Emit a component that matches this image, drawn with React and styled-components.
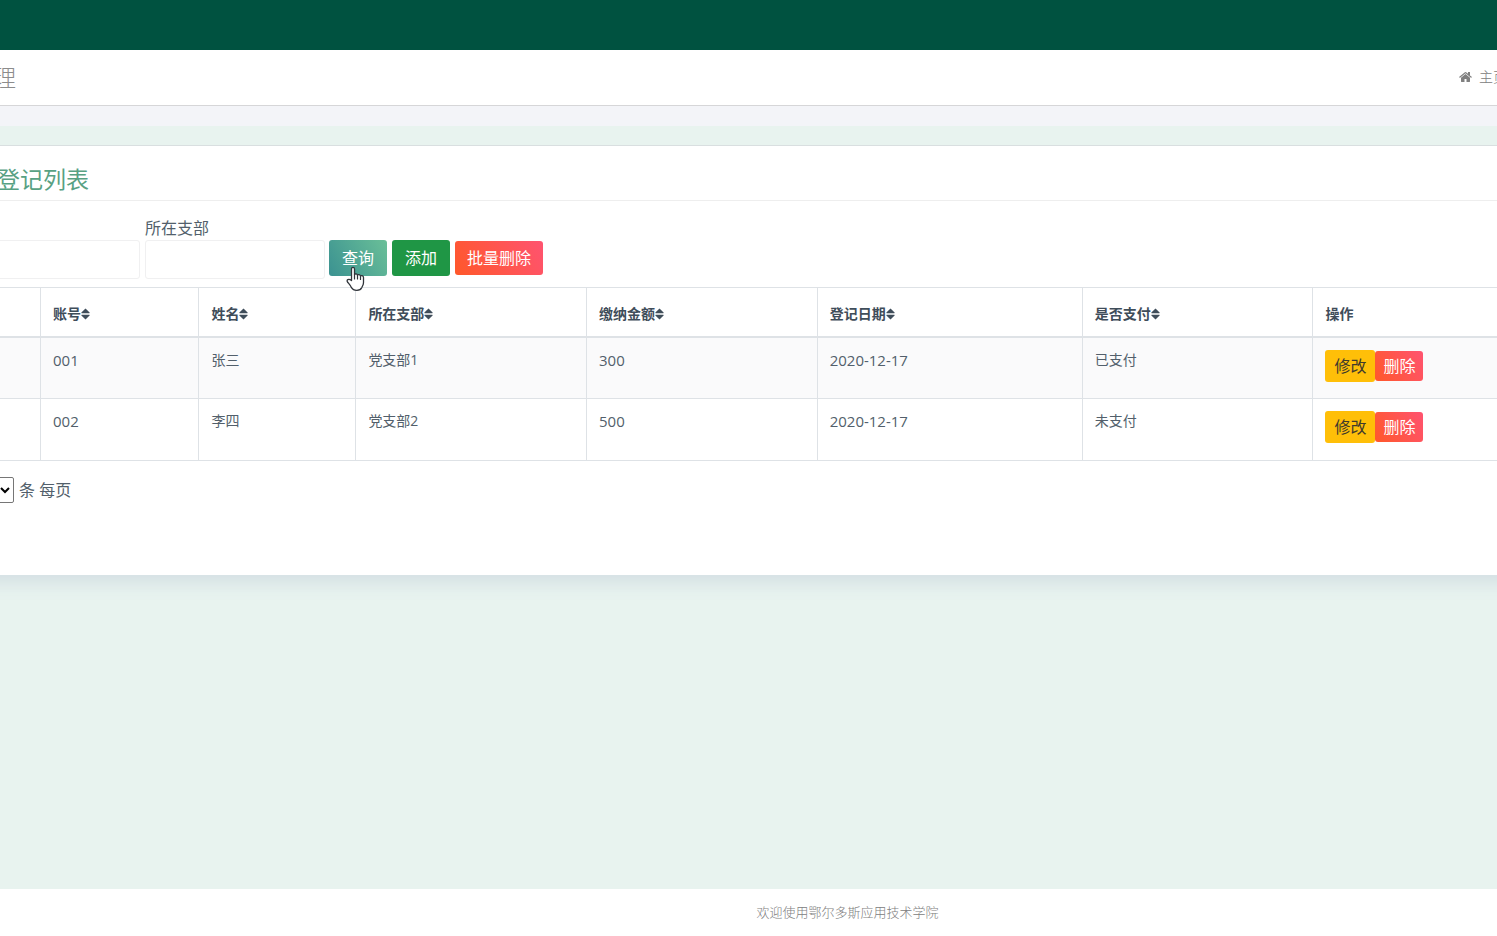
import React from "react";
import styled, { createGlobalStyle } from "styled-components";

const GlobalStyle = createGlobalStyle`
  *, *::before, *::after { box-sizing: border-box; }
  html { overflow-x: hidden; }
  body {
    margin: 0;
    background: #e8f3ef;
    color: #525f6b;
    font-family: "Open Sans", "Noto Sans CJK SC", sans-serif;
    font-size: 16px;
    line-height: 24px;
  }
`;

const Viewport = styled.div`
  overflow: hidden;
`;

/* The page is wider than the window and scrolled a little to the right. */
const Page = styled.div`
  display: flex;
  flex-direction: column;
  min-height: 100vh;
  margin: 0 -33px 0 -40px;
`;

const TopBar = styled.header`
  height: 50px;
  background: #005240;
`;

const TitleBar = styled.div`
  display: flex;
  align-items: center;
  justify-content: space-between;
  height: 56px;
  padding: 0 23px 2px 33px;
  background: #fff;
  border-bottom: 1px solid #d6d6d8;
`;

const PageTitle = styled.h1`
  margin: 0;
  color: #8c8c8c;
  font-size: 23px;
  font-weight: 300;
`;

const HomeLink = styled.a`
  display: flex;
  align-items: center;
  gap: 6px;
  color: #808080;
  font-size: 14px;
  font-weight: 300;
  text-decoration: none;
`;

const Band = styled.div`
  height: 20px;
  background: #f3f4f8;
`;

const Main = styled.main`
  flex: 1;
  padding: 19px 0 24px;
`;

const Card = styled.section`
  min-height: 430px;
  background: #fff;
  border-top: 1px solid #d9dfe0;
  box-shadow: 0 16px 16px -8px rgba(120, 140, 180, 0.18);
`;

const CardTitle = styled.h2`
  margin: 0;
  padding: 17px 37px 5px;
  border-bottom: 1px solid #eee;
  color: #58a183;
  font-size: 23px;
  font-weight: 400;
  line-height: 32px;
`;

const Filters = styled.form`
  display: flex;
  align-items: flex-end;
  gap: 5px;
  padding: 15px 0 8px;
`;

const Field = styled.label`
  display: flex;
  flex-direction: column;
  width: 180px;
  min-height: 63px;
  justify-content: flex-end;
`;

const TextBox = styled.input`
  width: 100%;
  height: 39px;
  padding: 0 12px;
  border: 1px solid #f0f0f1;
  border-radius: 3px;
  background: #fff;
  font: inherit;
`;

const FilterButtons = styled.div`
  display: flex;
  align-items: center;
  gap: 5px;
  height: 36px;
  margin: 0 0 3px -1px;
`;

const tones = {
  query: "linear-gradient(60deg, #3b9291, #6abf98)",
  add: "#1f9645",
  danger: "linear-gradient(60deg, #ff582a, #ff5370)",
  edit: "#ffbf08",
};

const Button = styled.button`
  position: relative;
  display: flex;
  align-items: center;
  justify-content: center;
  height: ${(p) => (p.$small ? 32 : 36) - (p.$tone === "danger" ? 2 : 0)}px;
  padding: 0 ${(p) => (p.$small ? 9 : 13) - (p.$tone === "danger" ? 1 : 0)}px;
  border: 0;
  border-radius: 3px;
  background: ${(p) => tones[p.$tone]};
  color: ${(p) => (p.$tone === "edit" ? "#3f3a2c" : "#fff")};
  font-family: inherit;
  font-size: 16px;
  line-height: 20px;
  cursor: pointer;
`;

const Pointer = styled.svg`
  position: absolute;
  top: 26px;
  left: 17px;
  pointer-events: none;
`;

const Table = styled.table`
  width: 100%;
  table-layout: fixed;
  border-collapse: collapse;
  font-size: 14px;
  line-height: 20px;
  text-align: left;
`;

const HeadCell = styled.th`
  width: ${(p) => p.$width};
  height: 49px;
  padding: 4px 12px 0;
  border: 1px solid #dee2e6;
  border-bottom-width: 2px;
  color: #3f4d5a;
  font-weight: 700;
`;

const HeadLabel = styled.span`
  display: flex;
  align-items: center;
`;

const Row = styled.tr`
  height: 62px;
  background: ${(p) => (p.$striped ? "#fafafb" : "#fff")};
`;

const Cell = styled.td`
  padding: 12px;
  border: 1px solid #dee2e6;
  font-size: ${(p) => (p.$numeric ? 15 : 14)}px;
  vertical-align: top;
`;

const Actions = styled.div`
  display: flex;
  align-items: center;
  height: 32px;
`;

const Pager = styled.label`
  display: flex;
  align-items: center;
  gap: 5px;
  padding-top: 16px;
`;

const PageSize = styled.select`
  width: 54px;
  height: 26px;
  border: 1px solid #767676;
  border-radius: 2px;
  background: #fff;
  color: #000;
  font: inherit;
`;

const Footer = styled.footer`
  height: 47px;
  padding: 11px 0 0 205px;
  background: #fff;
  color: #808080;
  font-size: 13px;
  font-weight: 300;
  text-align: center;
`;

const columns = [
  { title: "", width: "5.1%" },
  { title: "账号", width: "10.1%", sortable: true },
  { title: "姓名", width: "10%", sortable: true },
  { title: "所在支部", width: "14.7%", sortable: true },
  { title: "缴纳金额", width: "14.7%", sortable: true },
  { title: "登记日期", width: "16.9%", sortable: true },
  { title: "是否支付", width: "14.7%", sortable: true },
  { title: "操作", width: "auto" },
];

const records = [
  { id: "001", name: "张三", branch: "党支部1", amount: "300", date: "2020-12-17", paid: "已支付" },
  { id: "002", name: "李四", branch: "党支部2", amount: "500", date: "2020-12-17", paid: "未支付" },
];

function HomeIcon() {
  return (
    <svg width="14" height="14" viewBox="0 0 1792 1792" fill="currentColor" aria-hidden="true">
      <path d="M1408 992v480q0 26-19 45t-45 19h-384v-384h-256v384h-384q-26 0-45-19t-19-45v-480q0-1 .5-3t.5-3l575-474 575 474q1 2 1 6zm223-69l-62 74q-8 9-21 11h-3q-13 0-21-7l-692-577-692 577q-12 8-24 7-13-2-21-11l-62-74q-8-10-7-23.5t11-21.5l719-599q32-26 76-26t76 26l244 204v-195q0-14 9-23t23-9h192q14 0 23 9t9 23v408l219 182q10 8 11 21.5t-7 23.5z" />
    </svg>
  );
}

function SortIcon() {
  return (
    <svg width="9" height="12" viewBox="0 0 9 12" fill="currentColor" aria-hidden="true">
      <path d="M4.500 .5 8.600 4.400Q9 5.200 8.200 5.200H.8Q0 5.200.4 4.400ZM4.500 11.500.4 7.600Q0 6.800.8 6.800H8.200Q9 6.800 8.600 7.600Z" />
    </svg>
  );
}

function HandPointer() {
  return (
    <Pointer width="20" height="26" viewBox="0 0 20 26" aria-hidden="true">
      <path
        d="M5.500 14.500V3c0-2.300 3-2.300 3 0v5.800c.4-1.300 2.700-1.100 3 .5.500-1.100 2.700-.8 3 .8.600-1 3-.6 3 1.500v5c0 2.600-1.200 3.500-1.700 4.900-.8 2-2.400 2.800-5 2.800-2.900 0-4.400-1-5.600-3.200-.9-1.800-2.200-3.200-3.700-5.100-1.300-2 .9-3.700 4-1.500z"
        fill="#fff"
        stroke="#30343a"
        strokeWidth="1.300"
        strokeLinejoin="round"
      />
      <path d="M8.500 8.800v4.200M11.500 9.500v3.500M14.500 10.500v3" fill="none" stroke="#30343a" strokeWidth="1.200" strokeLinecap="round" />
    </Pointer>
  );
}

export default function App() {
  return (
    <Viewport>
      <GlobalStyle />
      <Page>
        <TopBar />
        <TitleBar>
          <PageTitle>理</PageTitle>
          <HomeLink href="#home">
            <HomeIcon />
            主页
          </HomeLink>
        </TitleBar>
        <Band />
        <Main>
          <Card>
            <CardTitle>登记列表</CardTitle>
            <Filters onSubmit={(e) => e.preventDefault()}>
              <Field>
                <TextBox type="text" aria-label="姓名" />
              </Field>
              <Field>
                所在支部
                <TextBox type="text" />
              </Field>
              <FilterButtons>
                <Button type="submit" $tone="query">
                  查询
                  <HandPointer />
                </Button>
                <Button type="button" $tone="add">添加</Button>
                <Button type="button" $tone="danger">批量删除</Button>
              </FilterButtons>
            </Filters>
            <Table>
              <thead>
                <tr>
                  {columns.map((c) => (
                    <HeadCell key={c.title} $width={c.width} scope="col">
                      <HeadLabel>
                        {c.title}
                        {c.sortable && <SortIcon />}
                      </HeadLabel>
                    </HeadCell>
                  ))}
                </tr>
              </thead>
              <tbody>
                {records.map((r, i) => (
                  <Row key={r.id} $striped={i % 2 === 0}>
                    <Cell />
                    <Cell $numeric>{r.id}</Cell>
                    <Cell>{r.name}</Cell>
                    <Cell>{r.branch}</Cell>
                    <Cell $numeric>{r.amount}</Cell>
                    <Cell $numeric>{r.date}</Cell>
                    <Cell>{r.paid}</Cell>
                    <Cell>
                      <Actions>
                        <Button type="button" $small $tone="edit">修改</Button>
                        <Button type="button" $small $tone="danger">删除</Button>
                      </Actions>
                    </Cell>
                  </Row>
                ))}
              </tbody>
            </Table>
            <Pager>
              <PageSize defaultValue="10">
                <option>10</option>
                <option>25</option>
                <option>50</option>
              </PageSize>
              条 每页
            </Pager>
          </Card>
        </Main>
        <Footer>欢迎使用鄂尔多斯应用技术学院</Footer>
      </Page>
    </Viewport>
  );
}
